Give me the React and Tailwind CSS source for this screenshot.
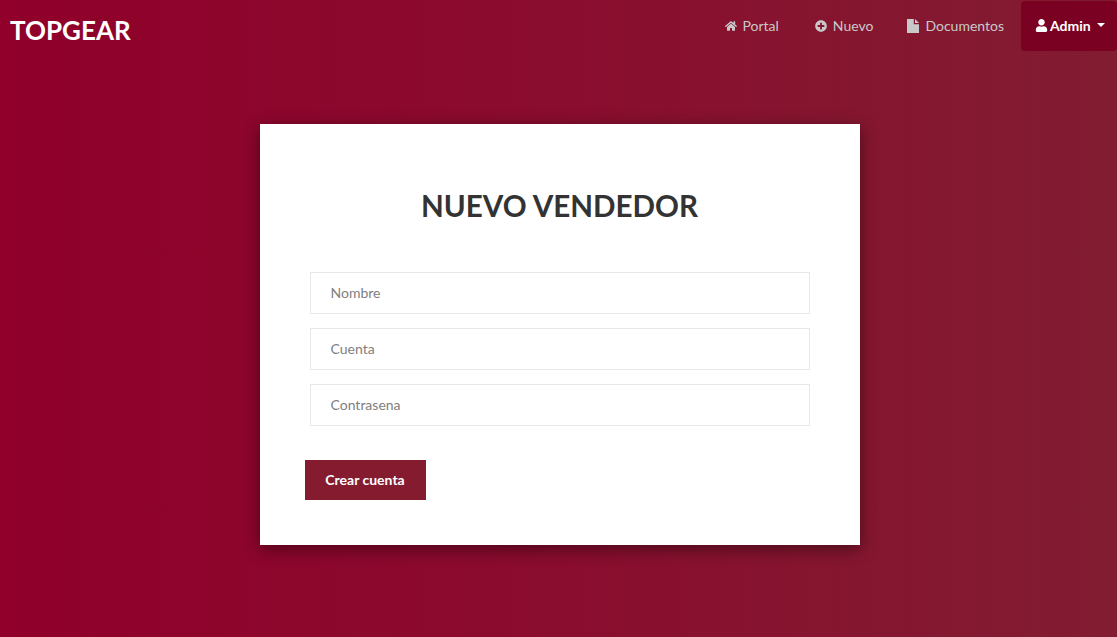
import { FaHome, FaPlusCircle, FaUser } from 'react-icons/fa';

function FileIcon() {
  return (
    <svg width="12" height="14" viewBox="0 0 12 14" fill="currentColor">
      <path d="M0 0h6.8v5.2H12V14H0z" />
      <path d="M8 0l4 4H8z" />
    </svg>
  );
}

const links = [
  { label: 'Portal', icon: <FaHome className="text-[12px]" />, linkClass: 'pl-[18px] pr-[20px] gap-[5px]' },
  { label: 'Nuevo', icon: <FaPlusCircle className="text-[12px]" />, linkClass: 'pl-[16px] pr-[17px] gap-[6px]' },
  { label: 'Documentos', icon: <FileIcon />, linkClass: 'pl-[17px] pr-[17px] gap-[6px]' },
];

const fields = ['Nombre', 'Cuenta', 'Contrasena'];

export default function App() {
  return (
    <div className="min-h-[637px] bg-gradient-to-r from-[#90002a] via-[#8a0c2e] to-[#811c31] font-['Lato','Liberation_Sans',sans-serif] flex flex-col">
      <nav className="h-[51px] flex justify-between items-start">
        <a href="#" className="pl-[10px] pt-[13px] text-[26px] leading-[34px] font-bold text-white">TOPGEAR</a>
        <ul className="flex items-start">
          {links.map(({ label, icon, linkClass }) => (
            <li key={label}>
              <a href="#" className={`h-[51px] flex items-center ${linkClass} text-[14px] text-[#c9c9c9]`}>
                {icon}
                {label}
              </a>
            </li>
          ))}
          <li>
            <a href="#" className="mt-[1px] h-[50px] w-[96px] pl-[14px] pb-[2px] flex items-center gap-[2px] rounded-[4px] bg-[#7a0122] text-[14px] font-bold text-white">
              <FaUser className="text-[13px]" />
              Admin
              <span className="ml-[4px] w-0 h-0 border-x-[4px] border-t-[4px] border-x-transparent border-t-white" />
            </a>
          </li>
        </ul>
      </nav>

      <main className="flex justify-center pt-[73px] pl-[2px]">
        <form className="w-[600px] h-[421px] bg-white px-[50px] pt-[60px] shadow-[0_4px_16px_rgba(0,0,0,0.45)]">
          <h1 className="text-center text-[29.6px] leading-[44px] font-bold text-[#333333]">NUEVO VENDEDOR</h1>
          <div className="mt-[44px] flex flex-col gap-[14px]">
            {fields.map((field) => (
              <input
                key={field}
                placeholder={field}
                className="h-[42px] w-full px-[20px] pb-[2px] border border-[#e8e8e8] bg-white text-[14px] text-[#555555] placeholder:text-[#808080] outline-none"
              />
            ))}
          </div>
          <button type="button" className="mt-[34px] -ml-[5px] h-[40px] w-[121px] pb-[2px] bg-[#841b2f] text-[14px] font-bold text-white">
            Crear cuenta
          </button>
        </form>
      </main>
    </div>
  );
}
